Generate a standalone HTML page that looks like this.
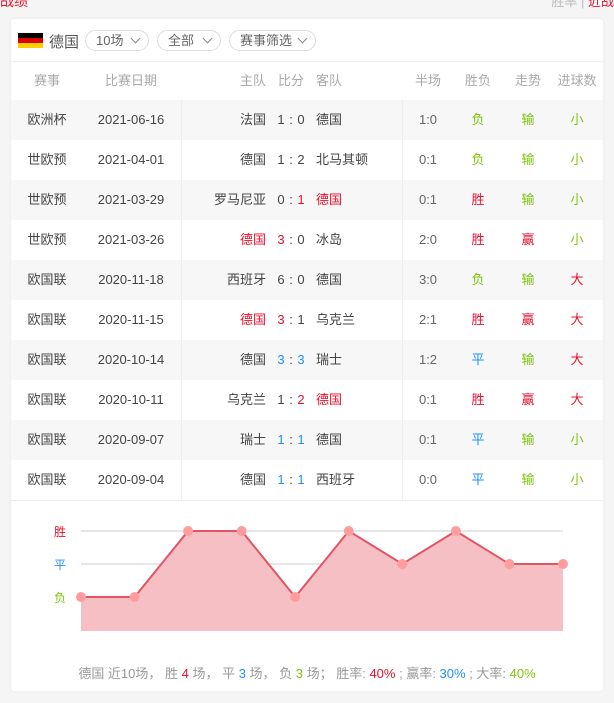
<!DOCTYPE html>
<html><head><meta charset="utf-8"><style>
*{margin:0;padding:0;box-sizing:border-box}
body{width:614px;height:703px;background:#f5f5f5;font-family:"Liberation Sans","Noto Sans CJK SC",sans-serif;position:relative;overflow:hidden;color:#444;font-size:13px}
.card{position:absolute;left:11px;top:19px;width:592px;height:672px;background:#fff;border-radius:3px;box-shadow:0 0 3px rgba(0,0,0,.06)}
.hd{height:43px;border-bottom:1px solid #eee;position:relative}
.flag{position:absolute;left:7px;top:14px;width:25px;height:15px}
.flag div{height:5px}
.tname{position:absolute;left:38px;top:12px;font-size:15px;color:#555}
.sel{position:absolute;top:11px;height:21px;border:1px solid #ddd;border-radius:11px;font-size:13px;color:#666;line-height:19px;padding-left:10px}
.sel i{position:absolute;right:9px;top:4px;width:7px;height:7px;border-right:1px solid #888;border-bottom:1px solid #888;transform:rotate(45deg)}
.th,.tr{position:absolute;left:0;width:592px;height:40px;line-height:40px}
.th span,.tr span{position:absolute;top:0}
.th{top:43px;height:38px;line-height:38px;color:#aaa}
.c{transform:translateX(-50%);white-space:nowrap}
.g{background:#f7f7f7}
.vl{position:absolute;top:81px;width:1px;height:400px;background:#eee}
.r{color:#e8112d}.gr{color:#7cc50b}.b{color:#1e8fff}
.foot{position:absolute;top:644px;left:0;width:592px;text-align:center;color:#999;font-size:13px}
.top{position:absolute;top:-9px;left:0;color:#e8112d;font-size:14px}
</style></head><body>
<div class="top">战绩</div>
<div style="position:absolute;right:0;top:-9px;font-size:13px;color:#bbb">胜率 | <span class="r">近战</span></div>
<div class="card">
<div class="hd">
<div class="flag"><div style="background:#000"></div><div style="background:#dd0000"></div><div style="background:#ffce00"></div></div>
<div class="tname">德国</div>
<div class="sel" style="left:74px;width:64px">10场<i></i></div>
<div class="sel" style="left:146px;width:64px">全部<i></i></div>
<div class="sel" style="left:218px;width:87px">赛事筛选<i></i></div>
</div>
<div class="th"><span class="c" style="left:36px">赛事</span><span class="c" style="left:120px">比赛日期</span><span style="right:337px">主队</span><span class="c" style="left:280px">比分</span><span style="left:305px">客队</span><span class="c" style="left:417px">半场</span><span class="c" style="left:467px">胜负</span><span class="c" style="left:517px">走势</span><span class="c" style="left:566px">进球数</span></div>
<div id="rows"></div>
<div class="vl" style="left:170px"></div><div class="vl" style="left:391px"></div>
<div style="position:absolute;left:0;top:481px;width:592px;height:1px;background:#eee"></div>
<svg style="position:absolute;left:0;top:481px" width="592" height="160">
<line x1="70" y1="31" x2="552" y2="31" stroke="#ccc"/><line x1="70" y1="64" x2="552" y2="64" stroke="#ccc"/><line x1="70" y1="97" x2="552" y2="97" stroke="#ccc"/>
<polygon points="70,97 123.6,97 177.1,31 230.7,31 284.2,97 337.8,31 391.3,64 444.9,31 498.4,64 552,64 552,131 70,131" fill="#f6bfc3"/>
<polyline points="70,97 123.6,97 177.1,31 230.7,31 284.2,97 337.8,31 391.3,64 444.9,31 498.4,64 552,64" fill="none" stroke="#e05565" stroke-width="2"/>
<g fill="#ff9c9c"><circle cx="70" cy="97" r="5"/><circle cx="123.6" cy="97" r="5"/><circle cx="177.1" cy="31" r="5"/><circle cx="230.7" cy="31" r="5"/><circle cx="284.2" cy="97" r="5"/><circle cx="337.8" cy="31" r="5"/><circle cx="391.3" cy="64" r="5"/><circle cx="444.9" cy="31" r="5"/><circle cx="498.4" cy="64" r="5"/><circle cx="552" cy="64" r="5"/></g>
<text x="43" y="36" font-size="12" fill="#e8112d" font-family="Liberation Sans,Noto Sans CJK SC,sans-serif">胜</text>
<text x="43" y="69" font-size="12" fill="#1e8fff" font-family="Liberation Sans,Noto Sans CJK SC,sans-serif">平</text>
<text x="43" y="102" font-size="12" fill="#7cc50b" font-family="Liberation Sans,Noto Sans CJK SC,sans-serif">负</text>
</svg>
<div class="foot">德国 近10场， 胜 <span class="r">4</span> 场， 平 <span class="b">3</span> 场， 负 <span class="gr">3</span> 场； 胜率: <span class="r">40%</span> ; 赢率: <span class="b">30%</span> ; 大率: <span class="gr">40%</span></div>
</div>
<script>
var d=[["欧洲杯","2021-06-16","法国","1","0","德国","","1:0","负","输","小"],
["世欧预","2021-04-01","德国","1","2","北马其顿","","0:1","负","输","小"],
["世欧预","2021-03-29","罗马尼亚","0","1","德国","a","0:1","胜","输","小"],
["世欧预","2021-03-26","德国","3","0","冰岛","h","2:0","胜","赢","小"],
["欧国联","2020-11-18","西班牙","6","0","德国","","3:0","负","输","大"],
["欧国联","2020-11-15","德国","3","1","乌克兰","h","2:1","胜","赢","大"],
["欧国联","2020-10-14","德国","3","3","瑞士","d","1:2","平","输","大"],
["欧国联","2020-10-11","乌克兰","1","2","德国","a","0:1","胜","赢","大"],
["欧国联","2020-09-07","瑞士","1","1","德国","d","0:1","平","输","小"],
["欧国联","2020-09-04","德国","1","1","西班牙","d","0:0","平","输","小"]];
var cm={"胜":"r","赢":"r","大":"r","负":"gr","输":"gr","小":"gr","平":"b"};
var h="";d.forEach(function(r,i){
var hc=r[6]=="h"?"r":"",ac=r[6]=="a"?"r":"",s1=r[6]=="h"?"r":(r[6]=="d"?"b":""),s2=r[6]=="a"?"r":(r[6]=="d"?"b":"");
h+='<div class="tr'+(i%2==0?' g':'')+'" style="top:'+(81+i*40)+'px"><span class="c" style="left:36px">'+r[0]+'</span><span class="c" style="left:120px">'+r[1]+'</span><span class="'+hc+'" style="right:337px">'+r[2]+'</span><span class="c '+s1+'" style="left:270px">'+r[3]+'</span><span class="c" style="left:280px">:</span><span class="c '+s2+'" style="left:290px">'+r[4]+'</span><span class="'+ac+'" style="left:305px">'+r[5]+'</span><span class="c" style="left:417px;color:#666">'+r[7]+'</span><span class="c '+cm[r[8]]+'" style="left:467px">'+r[8]+'</span><span class="c '+cm[r[9]]+'" style="left:517px">'+r[9]+'</span><span class="c '+cm[r[10]]+'" style="left:566px">'+r[10]+'</span></div>';});
document.getElementById("rows").innerHTML=h;
</script>
</body></html>
